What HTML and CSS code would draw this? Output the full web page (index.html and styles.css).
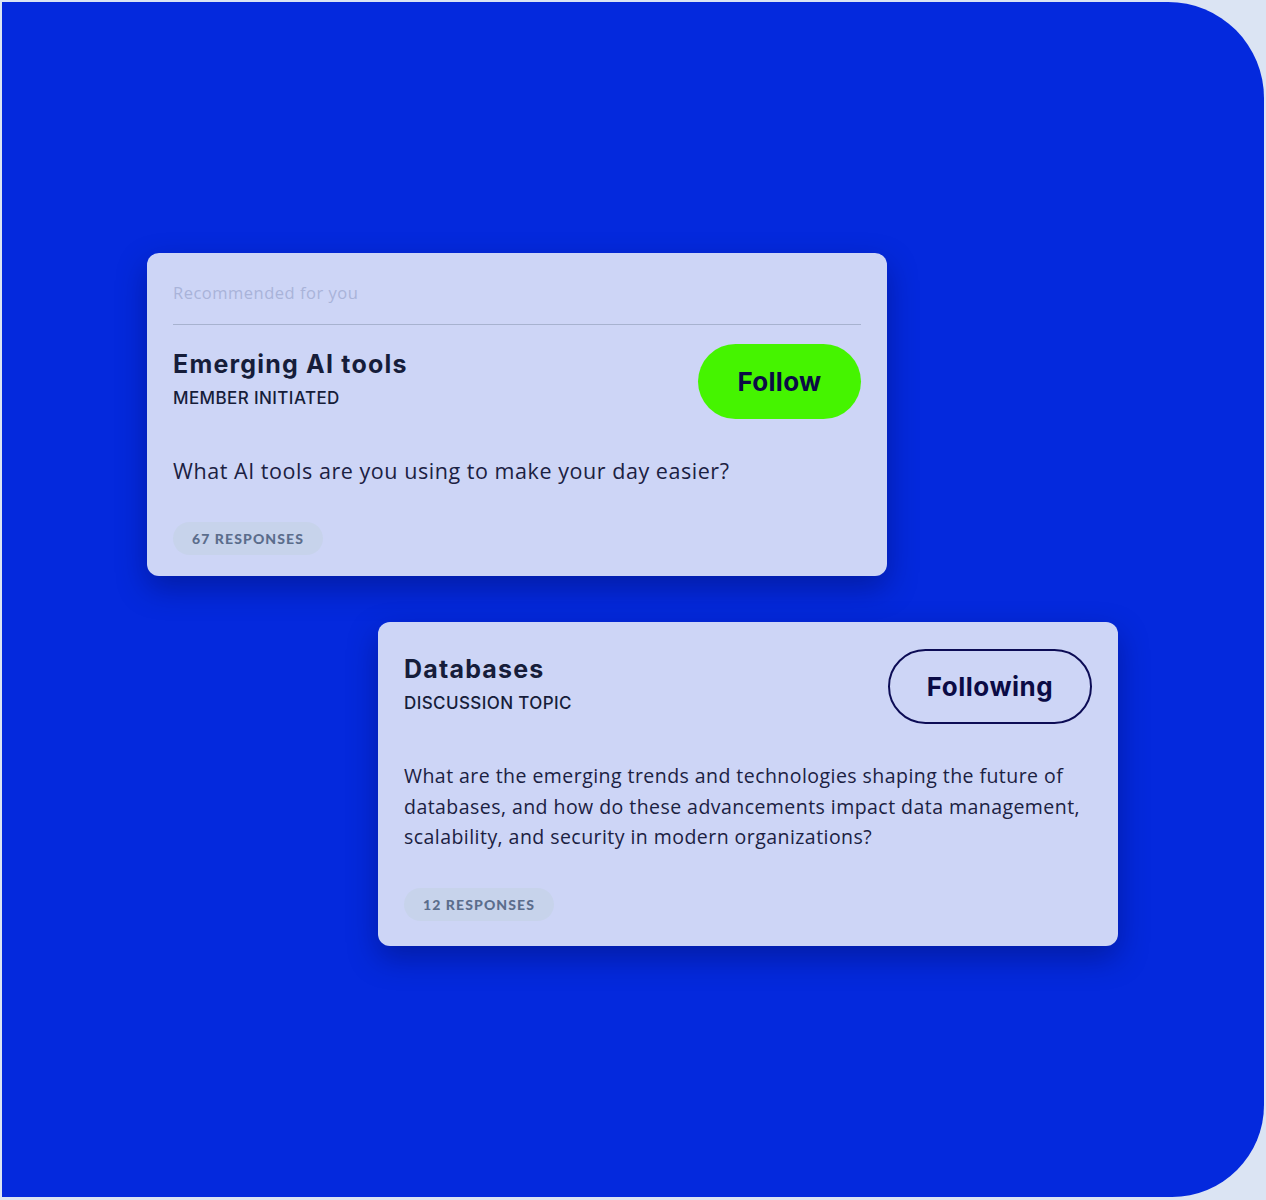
FILE: index.html
```html
<!DOCTYPE html>
<html>
<head>
<meta charset="utf-8">
<link rel="stylesheet" href="styles.css">
</head>
<body>
<div class="frame">
  <div class="card card-first">
    <div class="eyebrow">Recommended for you</div>
    <div class="head">
      <div class="titles">
        <div class="title">Emerging AI tools</div>
        <div class="kind">MEMBER INITIATED</div>
      </div>
      <button class="btn btn-follow">Follow</button>
    </div>
    <p class="question q-first">What AI tools are you using to make your day easier?</p>
    <span class="badge">67 RESPONSES</span>
  </div>
  <div class="card card-second">
    <div class="head">
      <div class="titles">
        <div class="title">Databases</div>
        <div class="kind">DISCUSSION TOPIC</div>
      </div>
      <button class="btn btn-following">Following</button>
    </div>
    <p class="question q-second">What are the emerging trends and technologies shaping the future of databases, and how do these advancements impact data management, scalability, and security in modern organizations?</p>
    <span class="badge">12 RESPONSES</span>
  </div>
</div>
</body>
</html>
```

FILE: styles.css
```css
* { box-sizing: border-box; }
html, body { margin: 0; padding: 0; }
body {
  background: #dbe4f3;
  width: 1266px;
  height: 1200px;
  overflow: hidden;
}
.frame {
  margin: 2px 2px 3px 2px;
  height: 1195px;
  background: #0429dd;
  border-radius: 0 96px 92px 0;
  padding-top: 251px;
  display: flex;
  flex-direction: column;
  align-items: flex-start;
}
.card {
  width: 740px;
  background: #cdd5f6;
  border-radius: 12px;
  box-shadow: 0 12px 30px rgba(0, 6, 60, 0.35);
  padding: 0 26px;
  display: flex;
  flex-direction: column;
  align-items: flex-start;
}
.card-first {
  margin-left: 145px;
  height: 323px;
  padding-top: 28px;
}
.card-second {
  margin-left: 376px;
  margin-top: 46px;
  height: 324px;
  padding-top: 27px;
}
.eyebrow {
  font-family: "Open Sans", sans-serif;
  font-size: 16.5px;
  line-height: 24px;
  letter-spacing: 0.5px;
  color: #a9b3d9;
  width: 100%;
  padding-bottom: 19px;
  border-bottom: 1px solid #a7b2cf;
}
.card-first .head { margin-top: 19px; }
.head {
  width: 100%;
  display: flex;
  justify-content: space-between;
  align-items: center;
}
.titles { display: flex; flex-direction: column; margin-top: -6px; }
.title {
  font-family: "Inter", sans-serif;
  font-weight: 700;
  font-size: 25px;
  line-height: 30px;
  color: #161d3a;
  letter-spacing: 1.2px;
}
.kind {
  font-family: "Inter", sans-serif;
  font-weight: 500;
  font-size: 17px;
  line-height: 22px;
  color: #161d3a;
  letter-spacing: 0.4px;
  margin-top: 8px;
}
.btn {
  font-family: "Inter", sans-serif;
  font-weight: 700;
  font-size: 26px;
  color: #0b0b45;
  border-radius: 40px;
  padding: 0;
  display: flex;
  align-items: center;
  justify-content: center;
}
.btn-follow {
  width: 163px;
  height: 75px;
  background: #45f400;
  border: none;
  letter-spacing: 0.3px;
}
.btn-following {
  width: 204px;
  height: 75px;
  background: transparent;
  border: 2px solid #0c0c55;
  letter-spacing: 0.5px;
}
.question {
  font-family: "Open Sans", sans-serif;
  color: #1b2142;
  margin: 0;
}
.q-first {
  font-size: 21.5px;
  line-height: 30px;
  letter-spacing: 0.55px;
  margin-top: 37px;
}
.q-second {
  font-size: 19.5px;
  line-height: 30.5px;
  letter-spacing: 0.45px;
  margin-top: 37px;
}
.badge {
  font-family: "Lato", sans-serif;
  font-weight: 900;
  font-size: 14px;
  letter-spacing: 1.1px;
  color: #5b6d8c;
  background: #c7d3eb;
  border-radius: 17px;
  height: 33px;
  padding: 0 19px 0 19px;
  display: flex;
  align-items: center;
}
.card-first .badge { margin-top: 36px; }
.card-second .badge { margin-top: 35px; }
```
